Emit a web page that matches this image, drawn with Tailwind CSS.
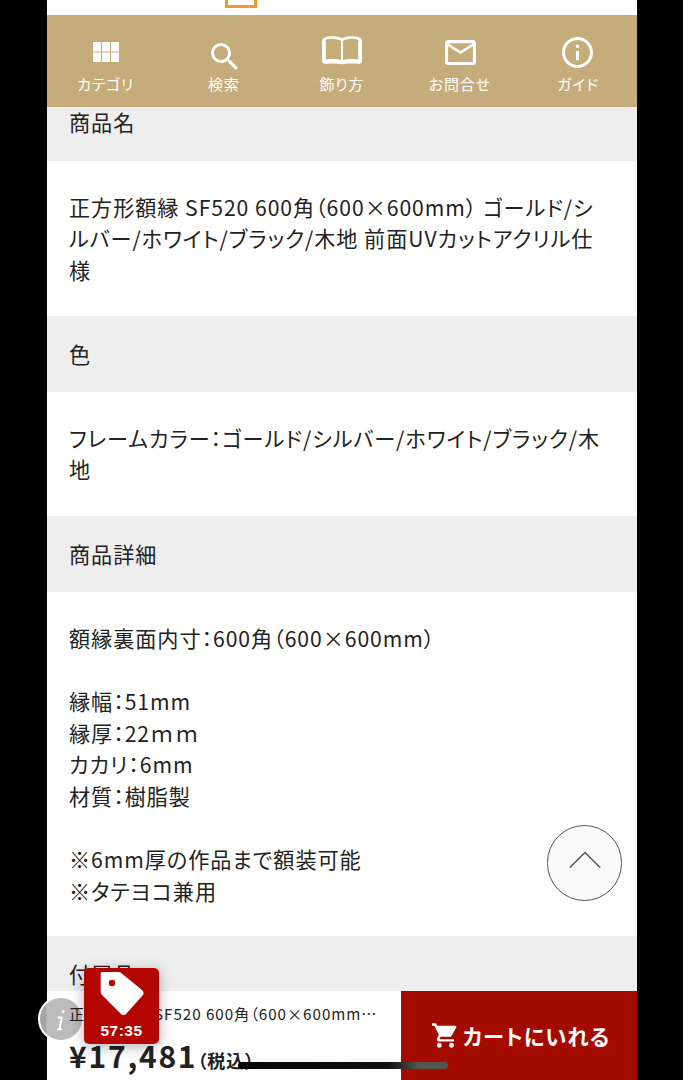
<!DOCTYPE html>
<html lang="ja">
<head>
<meta charset="utf-8">
<title>商品詳細</title>
<script src="https://cdn.jsdelivr.net/npm/@tailwindcss/browser@4"></script>
</head>
<body class="bg-black h-[1080px] overflow-hidden font-['Noto_Sans_CJK_JP',sans-serif] [font-feature-settings:'palt'] tracking-[0.059em] text-[#222]">
<div class="relative ml-[46.5px] w-[590.5px] h-[1080px] bg-white flex flex-col">
  <header class="h-[15px] shrink-0 flex pl-[178.5px]">
    <div class="w-8 h-2 border-[3px] border-t-0 border-[#eb9c2c]"></div>
  </header>
  <nav class="h-[92px] shrink-0 bg-[#c5ac7b] text-white grid grid-cols-5 text-[15px] leading-[20px] tracking-[0.05em]">
    <a class="flex flex-col items-center justify-end pb-[13px]">
      <svg class="w-[26px] h-[20px] mb-[12px]" viewBox="0 0 26 20" fill="currentColor"><path d="M0 0h8v9.500H0zM9 0h8v9.500H9zM18 0h8v9.500h-8zM0 10.500h8V20H0zM9 10.500h8V20H9zM18 10.500h8V20h-8z"/></svg>
      <span>カテゴリ</span>
    </a>
    <a class="flex flex-col items-center justify-end pb-[13px]">
      <svg class="w-[27px] h-[27px] mb-[4px] ml-px" viewBox="3 3 17.5 17.5" fill="currentColor"><path d="M15.5 14h-.79l-.28-.27A6.471 6.471 0 0 0 16 9.5 6.5 6.5 0 1 0 9.500 16c1.610 0 3.090-.59 4.230-1.570l.27.280v.79l5 4.990L20.490 19l-4.990-5zm-6 0C7.010 14 5 11.990 5 9.500S7.010 5 9.500 5 14 7.010 14 9.500 11.990 14 9.500 14z"/></svg>
      <span>検索</span>
    </a>
    <a class="flex flex-col items-center justify-end pb-[13px]">
      <svg class="w-[42px] h-[30px] mb-[8px]" viewBox="0 0 42 30" fill="none" stroke="currentColor"><path d="M21 4C18 1.200 8 .8 4 2.800Q2.300 3.500 2.300 5V25q0 1.200 1.200 1.200H17q3 0 4 1M21 4C24 1.200 34 .8 38 2.800q1.700.7 1.700 2.200V25q0 1.200-1.200 1.200H25q-3 0-4 1" stroke-width="2.600"/><path d="M3 4.500V25M39 4.500V25" stroke-width="3.600"/><path d="M21 4v23" stroke-width="2"/><path d="M3 25.700C9 24.700 15 24.800 21 26.300C27 24.800 33 24.700 39 25.700" stroke-width="4"/></svg>
      <span>飾り方</span>
    </a>
    <a class="flex flex-col items-center justify-end pb-[13px]">
      <svg class="w-[31px] h-[25px] mb-[9px] ml-px" viewBox="2 4 20 16" preserveAspectRatio="none" fill="currentColor"><path d="M22 6c0-1.100-.9-2-2-2H4c-1.100 0-2 .9-2 2v12c0 1.100.9 2 2 2h16c1.100 0 2-.9 2-2V6zm-2 0-8 5-8-5h16zm0 12H4V8l8 5 8-5v10z"/></svg>
      <span>お問合せ</span>
    </a>
    <a class="flex flex-col items-center justify-end pb-[13px]">
      <svg class="w-[31px] h-[31px] mb-[6px]" viewBox="2 2 20 20" fill="currentColor"><path d="M11 7h2v2h-2zm0 4h2v6h-2zm1-9C6.480 2 2 6.480 2 12s4.480 10 10 10 10-4.480 10-10S17.520 2 12 2zm0 18c-4.410 0-8-3.590-8-8s3.590-8 8-8 8 3.590 8 8-3.590 8-8 8z"/></svg>
      <span>ガイド</span>
    </a>
  </nav>
  <main class="h-[884px] shrink-0 overflow-hidden text-[21.150px] leading-[31.600px] whitespace-nowrap">
    <h2 class="bg-[#eeeeee] h-[54px] pl-[22.500px] leading-[30px]">商品名</h2>
    <p class="h-[155px] pt-[29.600px] pl-[22.500px]">正方形額縁 SF520 600角（600×600mm） ゴールド/シ<br>ルバー/ホワイト/ブラック/木地 前面UVカットアクリル仕<br>様</p>
    <h2 class="bg-[#eeeeee] h-[76px] pt-[21.600px] pl-[22.500px]">色</h2>
    <p class="h-[123.500px] pt-[29.600px] pl-[22.500px]">フレームカラー：ゴールド/シルバー/ホワイト/ブラック/木<br>地</p>
    <h2 class="bg-[#eeeeee] h-[76.500px] pt-[22px] pl-[22.500px]">商品詳細</h2>
    <p class="h-[344px] pt-[30px] pl-[22.500px]">額縁裏面内寸：600角（600×600mm）<br><br>縁幅：51mm<br>縁厚：22ｍｍ<br>カカリ：6mm<br>材質：樹脂製<br><br>※6mm厚の作品まで額装可能<br>※タテヨコ兼用</p>
    <h2 class="bg-[#eeeeee] h-[76px] pt-[22px] pl-[22.500px]">付属品</h2>
  </main>
  <footer class="h-[89px] shrink-0 flex whitespace-nowrap bg-white">
    <div class="w-[354.500px] pl-[22.500px] pt-[10px] relative z-10">
      <div class="text-[15.200px] leading-[24px] tracking-[0.063em]">正方形額縁 SF520 600角（600×600mm…</div>
      <div class="font-bold text-[30px] leading-[40px] mt-[10px] tracking-[0.059em]">¥17,481<span class="text-[18px] tracking-[0.050em]">（税込）</span></div>
    </div>
    <button class="flex-1 bg-[#a40b00] text-white font-bold text-[21.200px] tracking-[0.050em] flex items-center justify-center gap-[6px] pl-[4px]">
      <svg class="w-[25px] h-[25px]" viewBox="1 2 20.500 20" fill="currentColor"><path d="M7 18c-1.100 0-1.990.9-1.990 2S5.900 22 7 22s2-.9 2-2-.9-2-2-2zM1 2v2h2l3.600 7.590-1.350 2.450c-.16.280-.25.610-.25.960 0 1.100.9 2 2 2h12v-2H7.420c-.14 0-.25-.11-.25-.25l.03-.12.900-1.630h7.450c.75 0 1.410-.41 1.750-1.030l3.580-6.490A1 1 0 0 0 20 4H5.210l-.94-2H1zm16 16c-1.100 0-1.990.9-1.990 2s.89 2 1.990 2 2-.9 2-2-.9-2-2-2z"/></svg>
      <span>カートにいれる</span>
    </button>
  </footer>

  <a class="absolute left-[500.500px] top-[825px] w-[75px] h-[76px] rounded-full border-[1.500px] border-[#555] bg-[#fafafa] flex justify-center">
    <svg class="w-[32px] h-[18px] mt-[25px]" viewBox="0 0 32 18" fill="none" stroke="#555" stroke-width="1.600"><path d="M.8 16.500 16 1.500l15.200 15"/></svg>
  </a>
  <div class="absolute left-[-8.500px] top-[996px] w-[46px] h-[46px] rounded-full border-2 border-white bg-[linear-gradient(90deg,#a5a5a5_14%,#bcbcbc_16%)] flex items-center justify-center">
    <svg class="w-[10px] h-[22px] mt-px" viewBox="0 0 10 22" fill="none" stroke="#fff" stroke-width="2" stroke-linecap="round" stroke-linejoin="round"><path d="M2.500 8.500h3.200L3.500 20M2 20.200h3"/><circle cx="7" cy="2.500" r="1.500" fill="#fff" stroke="none"/></svg>
  </div>
  <div class="absolute z-20 left-[37.500px] top-[968px] w-[75px] h-[75.500px] rounded-[5px] bg-[#b30502] shadow-[0_3px_14px_rgba(0,0,0,0.3)] flex flex-col items-center text-white">
    <svg class="w-[44px] h-[44px] mt-[4px]" viewBox="0 0 44 44" fill="#fff"><path d="M2 0h16q2 0 3.500 1.300L42 18q3 2.800.5 5.500L26.500 41.500q-3 3-6 0L2 23Q.7 21.500.7 19.500V1.500Q.7 0 2 0z"/><circle cx="12" cy="11" r="3.200" fill="#b30502"/></svg>
    <span class="font-['Liberation_Sans',sans-serif] font-bold text-[15.500px] leading-[20px] tracking-[0.03em] mt-[5px]">57:35</span>
  </div>
  <div class="absolute z-20 left-[191px] top-[1061.500px] w-[210px] h-[7.500px] rounded-full bg-[linear-gradient(90deg,#050505_0%,#111_72%,#555_86%,#555_100%)]"></div>
</div>
</body>
</html>
